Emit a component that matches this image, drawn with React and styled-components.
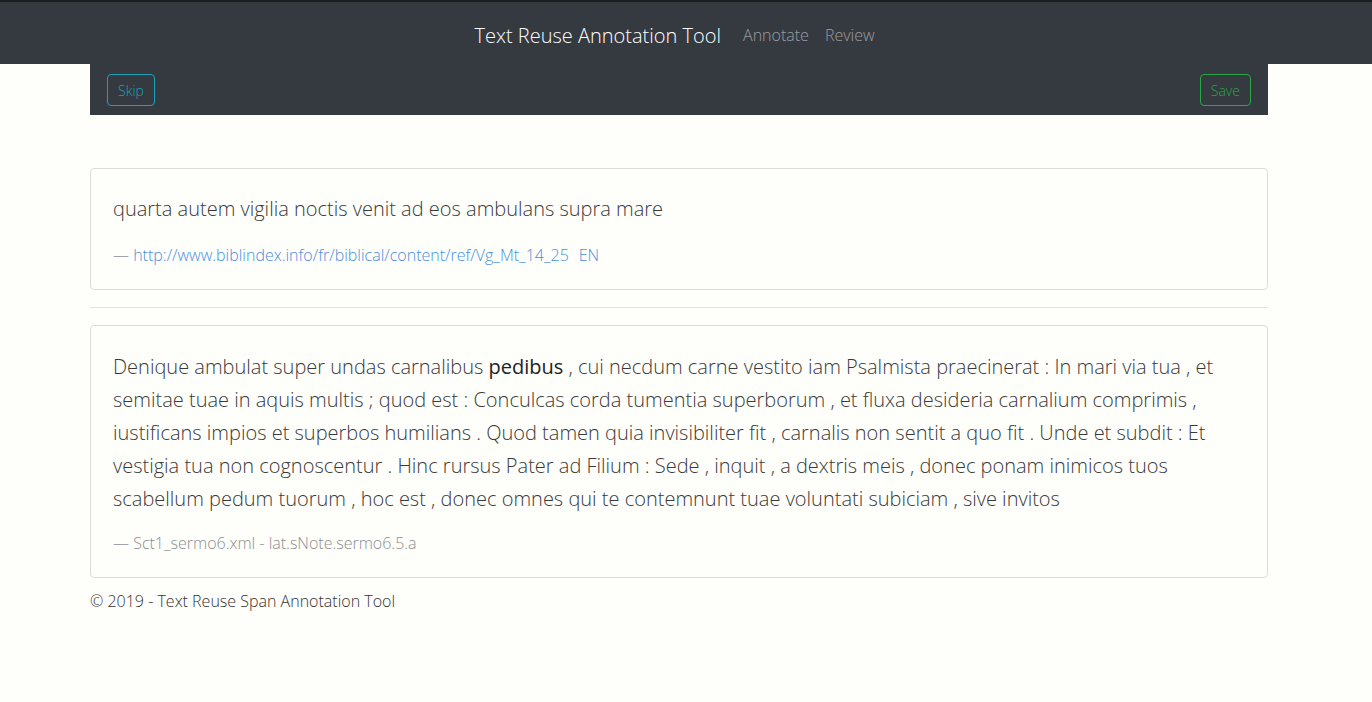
import React from "react";
import styled, { createGlobalStyle } from "styled-components";

const GlobalStyle = createGlobalStyle`
  html, body {
    margin: 0;
    padding: 0;
    background: #fefefb;
  }
  body {
    font-family: "Open Sans", "Noto Sans", sans-serif;
    font-weight: 300;
    color: #333;
  }
`;

const sourceText = "quarta autem vigilia noctis venit ad eos ambulans supra mare";

export default function App() {
  return (
    <>
      <GlobalStyle />
      <Navbar>
        <Brand>Text Reuse Annotation Tool</Brand>
        <NavLink>Annotate</NavLink>
        <NavLink>Review</NavLink>
      </Navbar>
      <Container>
        <Toolbar>
          <OutlineButton color="#17a2b8">Skip</OutlineButton>
          <OutlineButton color="#28a745">Save</OutlineButton>
        </Toolbar>

        <Card first>
          <Quote>{sourceText}</Quote>
          <Cite>
            — <Link>http://www.biblindex.info/fr/biblical/content/ref/Vg_Mt_14_25</Link>
            <Link spaced>EN</Link>
          </Cite>
        </Card>

        <Divider />

        <Card>
          <Quote tall>
            Denique ambulat super undas carnalibus <Bold>pedibus</Bold> , cui necdum carne vestito iam Psalmista praecinerat : In mari via tua , et semitae tuae in aquis multis ; quod est : Conculcas corda tumentia superborum , et fluxa desideria carnalium comprimis , iustificans impios et superbos humilians . Quod tamen quia invisibiliter fit , carnalis non sentit a quo fit . Unde et subdit : Et vestigia tua non cognoscentur . Hinc rursus Pater ad Filium : Sede , inquit , a dextris meis , donec ponam inimicos tuos scabellum pedum tuorum , hoc est , donec omnes qui te contemnunt tuae voluntati subiciam , sive invitos
          </Quote>
          <Cite>— Sct1_sermo6.xml - lat.sNote.sermo6.5.a</Cite>
        </Card>

        <Footer>© 2019 - Text Reuse Span Annotation Tool</Footer>
      </Container>
    </>
  );
}

const Navbar = styled.nav`
  display: flex;
  justify-content: center;
  align-items: center;
  box-sizing: border-box;
  height: 64px;
  padding: 4px 15px 0 0;
  background: #343a40;
  border-top: 2px solid #1b1e21;
`;

const Brand = styled.span`
  font-size: 20px;
  color: #fff;
  margin-right: 14px;
`;

const NavLink = styled.span`
  font-size: 16px;
  color: rgba(255, 255, 255, 0.5);
  padding: 0 8px;
`;

const Container = styled.div`
  width: 1178px;
  margin-left: 90px;
`;

const Toolbar = styled.div`
  display: flex;
  justify-content: space-between;
  align-items: center;
  height: 51px;
  padding: 0 17px;
  background: #343a40;
`;

const OutlineButton = styled.button`
  height: 32px;
  padding: 1px 10px 0;
  font-family: inherit;
  font-weight: 300;
  font-size: 14px;
  color: ${p => p.color};
  background: transparent;
  border: 1px solid ${p => p.color};
  border-radius: 4px;
`;

const Card = styled.div`
  margin-top: ${p => (p.first ? "53px" : "0")};
  border: 1px solid #dcdcdc;
  border-radius: 4px;
  padding: 20px 22px 23px;
`;

const Quote = styled.p`
  margin: 0 0 ${p => (p.tall ? "17px" : "19px")};
  padding-top: ${p => (p.tall ? "4px" : "3px")};
  font-size: 20px;
  line-height: 33px;
  color: #3a3a3a;
`;

const Bold = styled.b`
  font-weight: 500;
  color: #222;
`;

const Cite = styled.div`
  font-size: 16px;
  color: #8a8f94;
`;

const Link = styled.span`
  color: #4a8fe0;
  margin-left: ${p => (p.spaced ? "10px" : "0")};
`;

const Divider = styled.hr`
  margin: 17px 0;
  border: 0;
  border-top: 1px solid #e2e2e2;
`;

const Footer = styled.footer`
  padding-top: 12px;
  font-size: 16px;
  color: #333;
`;
